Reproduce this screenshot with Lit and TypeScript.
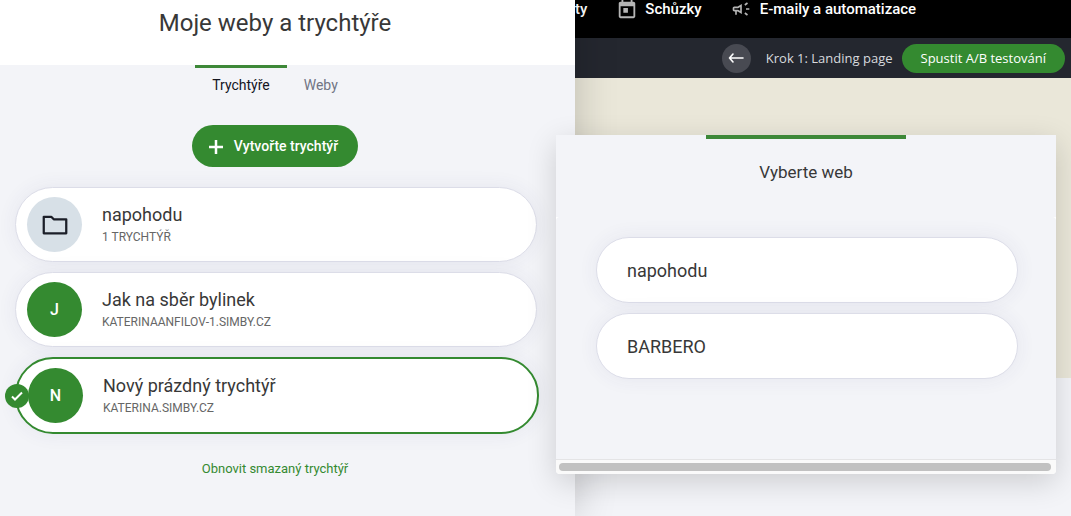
import { LitElement, html, css, svg, nothing } from "lit";
import { customElement, property, state } from "lit/decorators.js";

interface Funnel {
  title: string;
  caption: string;
  letter?: string;
}

const FUNNELS: Funnel[] = [
  { title: "napohodu", caption: "1 trychtýř" },
  { title: "Jak na sběr bylinek", caption: "katerinaanfilov-1.simby.cz", letter: "J" },
  { title: "Nový prázdný trychtýř", caption: "katerina.simby.cz", letter: "N" },
];

const folderIcon = svg`<svg width="30" height="30" viewBox="0 0 24 24" fill="none" stroke="currentColor" stroke-width="1.800" stroke-linejoin="round" aria-hidden="true"><path d="M3 5.400h6l2 2h10v11.200H3z"/></svg>`;
const calendarIcon = svg`<svg width="22" height="22" viewBox="0 0 24 24" fill="currentColor" aria-hidden="true"><path d="M19 4h-1V1h-2v3H8V1H6v3H5c-1.100 0-2 .9-2 2v14c0 1.100.9 2 2 2h14c1.100 0 2-.9 2-2V6c0-1.100-.9-2-2-2zm0 16H5V9h14v11zM8 11h5v5H8z"/></svg>`;
const hornIcon = svg`<svg width="20" height="20" viewBox="0 0 24 24" fill="currentColor" aria-hidden="true"><path d="M18 11v2h4v-2h-4zM16 17.610c.96.710 2.210 1.650 3.200 2.390.4-.53.8-1.070 1.200-1.600-.99-.74-2.240-1.680-3.200-2.400-.4.540-.8 1.080-1.200 1.610zM20.400 5.600c-.4-.53-.8-1.070-1.200-1.600-.99.740-2.240 1.680-3.200 2.400.4.530.8 1.070 1.200 1.600.96-.72 2.210-1.650 3.200-2.400zM4 9c-1.100 0-2 .9-2 2v2c0 1.100.9 2 2 2h1v4h2v-4h1l5 3V6L8 9H4zm5.030 1.710L11 9.530v4.940l-1.970-1.180-.48-.29H4v-2h4.550l.48-.29z"/></svg>`;

@customElement("funnel-card")
class FunnelCard extends LitElement {
  static styles = css`
    :host { display: block; margin-right: 2px; }
    :host([selected]) { margin-right: 0; }
    .card {
      position: relative; display: flex; align-items: center; gap: 20px;
      box-sizing: border-box; width: 100%; margin: 0; padding: 9px 11px;
      font: inherit; text-align: left; color: #383838; cursor: pointer;
      background: #fff; border: 1px solid #dcdde8; border-radius: 38px;
      box-shadow: 0 0 20px rgba(60, 60, 120, 0.07);
    }
    .selected { border: 2px solid #348a30; }
    .avatar {
      display: grid; place-items: center; flex: none; width: 55px; height: 55px;
      border-radius: 50%; background: #348a30; color: #fff;
      font-size: 16px; font-weight: 500;
    }
    .folder { background: #d7e0e7; color: #1b1e28; }
    .text { display: grid; gap: 2px; }
    .title { font-size: 18px; line-height: 22px; }
    .caption { font-size: 12px; line-height: 18px; color: #666; text-transform: uppercase; }
    .check {
      position: absolute; left: -12px; top: 50%; transform: translateY(-50%);
      width: 24px; height: 24px; border-radius: 50%; background: #348a30;
      display: grid; place-items: center;
    }
  `;
  @property({ attribute: false }) item!: Funnel;
  @property({ type: Boolean, reflect: true }) selected = false;

  render() {
    const { title, caption, letter } = this.item;
    return html`<button class="card ${this.selected ? "selected" : ""}" aria-pressed=${this.selected}>
      <span class="avatar ${letter ? "" : "folder"}">${letter ?? folderIcon}</span>
      <span class="text"><span class="title">${title}</span><span class="caption">${caption}</span></span>
      ${this.selected
        ? html`<span class="check"><svg width="14" height="14" viewBox="0 0 14 14" fill="none" stroke="#fff" stroke-width="2" aria-hidden="true"><path d="M2 7.500l3 3L12 3.500"/></svg></span>`
        : nothing}
    </button>`;
  }
}

@customElement("web-picker")
class WebPicker extends LitElement {
  static styles = css`
    :host {
      display: flex; flex-direction: column; overflow: hidden;
      background: #fff; border-radius: 0 0 4px 4px;
      box-shadow: 0 8px 30px rgba(0, 0, 0, 0.16);
    }
    .head { background: #f3f4f8; height: 82px; }
    .head::before {
      content: ""; display: block; width: 40%; height: 4px; margin: 0 auto; background: #3d8838;
    }
    h2 {
      margin: 0; padding-top: 22px; text-align: center;
      font-size: 17px; line-height: 22px; font-weight: 400; color: #383838;
    }
    .list {
      display: grid; gap: 10px; padding: 20px 38px 80px 40px;
      background: #f3f4f8; border-radius: 4px 4px 0 0;
    }
    .web {
      height: 66px; margin: 0; padding: 0 30px; text-align: left; cursor: pointer;
      font: inherit; font-size: 18px; color: #383838;
      background: #fff; border: 1px solid #dcdde8; border-radius: 33px;
      box-shadow: 0 0 20px rgba(60, 60, 120, 0.07);
    }
    .scroll { padding: 3px 5px 3px 3px; background: #fafafa; border-top: 1px solid #e4e4e6; }
    .thumb { height: 8px; border-radius: 4px; background: #c1c1c1; }
  `;
  render() {
    return html`
      <div class="head"><h2>Vyberte web</h2></div>
      <div class="list">
        ${["napohodu", "BARBERO"].map((w) => html`<button class="web">${w}</button>`)}
      </div>
      <div class="scroll"><div class="thumb"></div></div>`;
  }
}

@customElement("app-root")
class AppRoot extends LitElement {
  static styles = css`
    :host {
      position: relative; display: grid; overflow: hidden; min-height: 100vh;
      grid-template-columns: minmax(0, 575fr) minmax(0, 496fr);
      font-family: Roboto, "Liberation Sans", sans-serif; background: #f3f4f8;
    }
    .panel { position: relative; z-index: 1; background: #f3f4f8; box-shadow: 0 0 40px rgba(0, 0, 0, 0.2); }
    .panel-head { background: #fff; padding: 7px 25px 26px 0; }
    h1 { margin: 0; font-size: 24px; line-height: 32px; font-weight: 400; text-align: center; color: #383838; }
    .body { display: flex; flex-direction: column; align-items: center; padding-right: 25px; }
    .tabs { display: flex; }
    .tab {
      margin: 0; padding: 7px 17px; border: 0; border-top: 3px solid transparent; background: none;
      font: inherit; font-size: 14px; line-height: 20px; color: #717584; cursor: pointer;
    }
    .active { border-top-color: #3d8838; color: #14151f; }
    .create {
      display: flex; align-items: center; gap: 10px; height: 42px; margin: 23px 0 20px; padding: 0 20px 0 16px;
      border: 0; border-radius: 21px; background: #348a30; color: #fff; cursor: pointer;
      font: inherit; font-size: 14px; font-weight: 500;
    }
    .cards { display: grid; gap: 10px; align-self: stretch; margin: 0 -14px 0 15px; padding-right: 25px; }
    .restore { margin-top: 25px; font-size: 13px; line-height: 20px; color: #348a30; text-decoration: none; }
    .topbar {
      display: flex; align-items: flex-start; height: 38px; overflow: hidden;
      background: #000; color: #fff; white-space: nowrap;
    }
    .nav { display: flex; align-items: center; height: 18px; color: inherit; text-decoration: none; font-size: 15px; font-weight: 500; }
    .nav svg { flex: none; color: #b5b5b5; }
    .meet { gap: 7px; margin-left: 29px; }
    .mail { gap: 9px; margin-left: 29px; }
    .stepbar {
      display: flex; align-items: center; justify-content: flex-end; height: 40px; padding-right: 6px;
      background: #24272f; color: #d8dade; font: 13px "Open Sans", "Noto Sans", sans-serif; white-space: nowrap;
    }
    .back {
      display: grid; place-items: center; width: 29px; height: 29px; margin: 0 15px 0 0; padding: 0;
      border: 0; border-radius: 50%; background: #484a52; cursor: pointer;
    }
    .ab {
      height: 29px; margin: 0 0 0 9px; padding: 0 19px; border: 0; border-radius: 15px;
      background: #348a30; color: #fff; font: inherit; font-weight: 500; cursor: pointer;
    }
    .canvas { height: 300px; background: #eae7d9; }
    .dialog { position: absolute; z-index: 2; top: 135px; right: 15px; width: 500px; max-width: 90%; }
  `;
  @state() private tab = "Trychtýře";

  render() {
    return html`
      <section class="panel">
        <header class="panel-head"><h1>Moje weby a trychtýře</h1></header>
        <div class="body">
          <div class="tabs" role="tablist">
            ${["Trychtýře", "Weby"].map(
              (t) => html`<button role="tab" class="tab ${t === this.tab ? "active" : ""}"
                aria-selected=${t === this.tab} @click=${() => (this.tab = t)}>${t}</button>`
            )}
          </div>
          <button class="create">
            <svg width="16" height="16" viewBox="0 0 16 16" stroke="#fff" stroke-width="2.500" aria-hidden="true"><path d="M8 2v14M1 9h14"/></svg>
            Vytvořte trychtýř
          </button>
          <div class="cards">
            ${FUNNELS.map((f, i) => html`<funnel-card .item=${f} ?selected=${i === 2}></funnel-card>`)}
          </div>
          <a class="restore" href="#">Obnovit smazaný trychtýř</a>
        </div>
      </section>
      <main>
        <nav class="topbar">
          <a class="nav" href="#">ty</a>
          <a class="nav meet" href="#">${calendarIcon}Schůzky</a>
          <a class="nav mail" href="#">${hornIcon}E-maily a automatizace</a>
        </nav>
        <div class="stepbar">
          <button class="back" aria-label="Zpět">
            <svg width="16" height="12" viewBox="0 0 16 12" fill="none" stroke="#fff" stroke-width="1.600" stroke-linecap="round" stroke-linejoin="round" aria-hidden="true"><path d="M15 6H1.500M5 2L1.500 6 5 10"/></svg>
          </button>
          <span>Krok 1: Landing page</span>
          <button class="ab">Spustit A/B testování</button>
        </div>
        <div class="canvas"></div>
      </main>
      <web-picker class="dialog" role="dialog" aria-label="Vyberte web"></web-picker>`;
  }
}
